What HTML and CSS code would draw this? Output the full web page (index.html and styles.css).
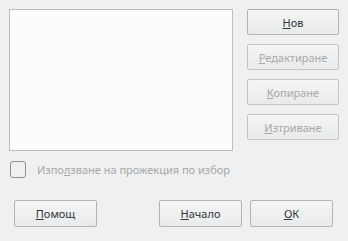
FILE: index.html
```html
<!DOCTYPE html>
<html lang="bg">
<head>
    <meta charset="UTF-8">
    <title>Проекции</title>
    <link rel="stylesheet" href="styles.css">
</head>
<body class="dialog">

    <div class="top-row">
        <div class="list-box"></div>
        <div class="side-buttons">
            <button class="button"><u>Н</u>ов</button>
            <button class="button disabled"><u>Р</u>едактиране</button>
            <button class="button disabled"><u>К</u>опиране</button>
            <button class="button disabled"><u>И</u>зтриване</button>
        </div>
    </div>

    <div class="check-row">
        <span class="checkbox"></span>
        <span class="check-label">Изпо<u>л</u>зване на прожекция по избор</span>
    </div>

    <div class="bottom-row">
        <button class="button wide"><u>П</u>омощ</button>
        <div class="spacer"></div>
        <button class="button wide"><u>Н</u>ачало</button>
        <button class="button wide"><u>О</u>К</button>
    </div>

</body>
</html>
```

FILE: styles.css
```css
.dialog {
    margin: 0;
    padding: 9px 9px 0 9px;
    background-color: #eff0f1;
    font-family: 'Noto Sans', sans-serif;
    font-size: 11px;
    color: #31363b;
}

.top-row {
    display: flex;
    gap: 14px;
}

.list-box {
    flex: none;
    width: 222px;
    height: 140px;
    border: 1px solid #bcbebf;
    background-color: #fcfcfc;
}

.side-buttons {
    display: flex;
    flex-direction: column;
    gap: 9px;
}

.button {
    box-sizing: border-box;
    width: 92px;
    height: 26px;
    padding: 0;
    border: 1px solid #b2b3b4;
    border-radius: 2px;
    background: linear-gradient(#f4f5f5, #e9eaeb);
    font-family: 'Noto Sans', sans-serif;
    font-size: 11px;
    color: #31363b;
}

.disabled {
    color: #a6a8a9;
    border-color: #c4c5c6;
}

.check-row {
    display: flex;
    align-items: center;
    gap: 11px;
    margin-top: 10px;
    padding-left: 1px;
}

.checkbox {
    box-sizing: border-box;
    width: 16px;
    height: 17px;
    border: 1px solid #8e9091;
    border-radius: 3px;
    background-color: #eff0f1;
}

.check-label {
    color: #a6a8a9;
}

.bottom-row {
    display: flex;
    gap: 8px;
    margin-top: 22px;
    padding: 0 6px 0 5px;
}

.wide {
    width: 83px;
    height: 27px;
}

.spacer {
    flex: 1;
}
```
